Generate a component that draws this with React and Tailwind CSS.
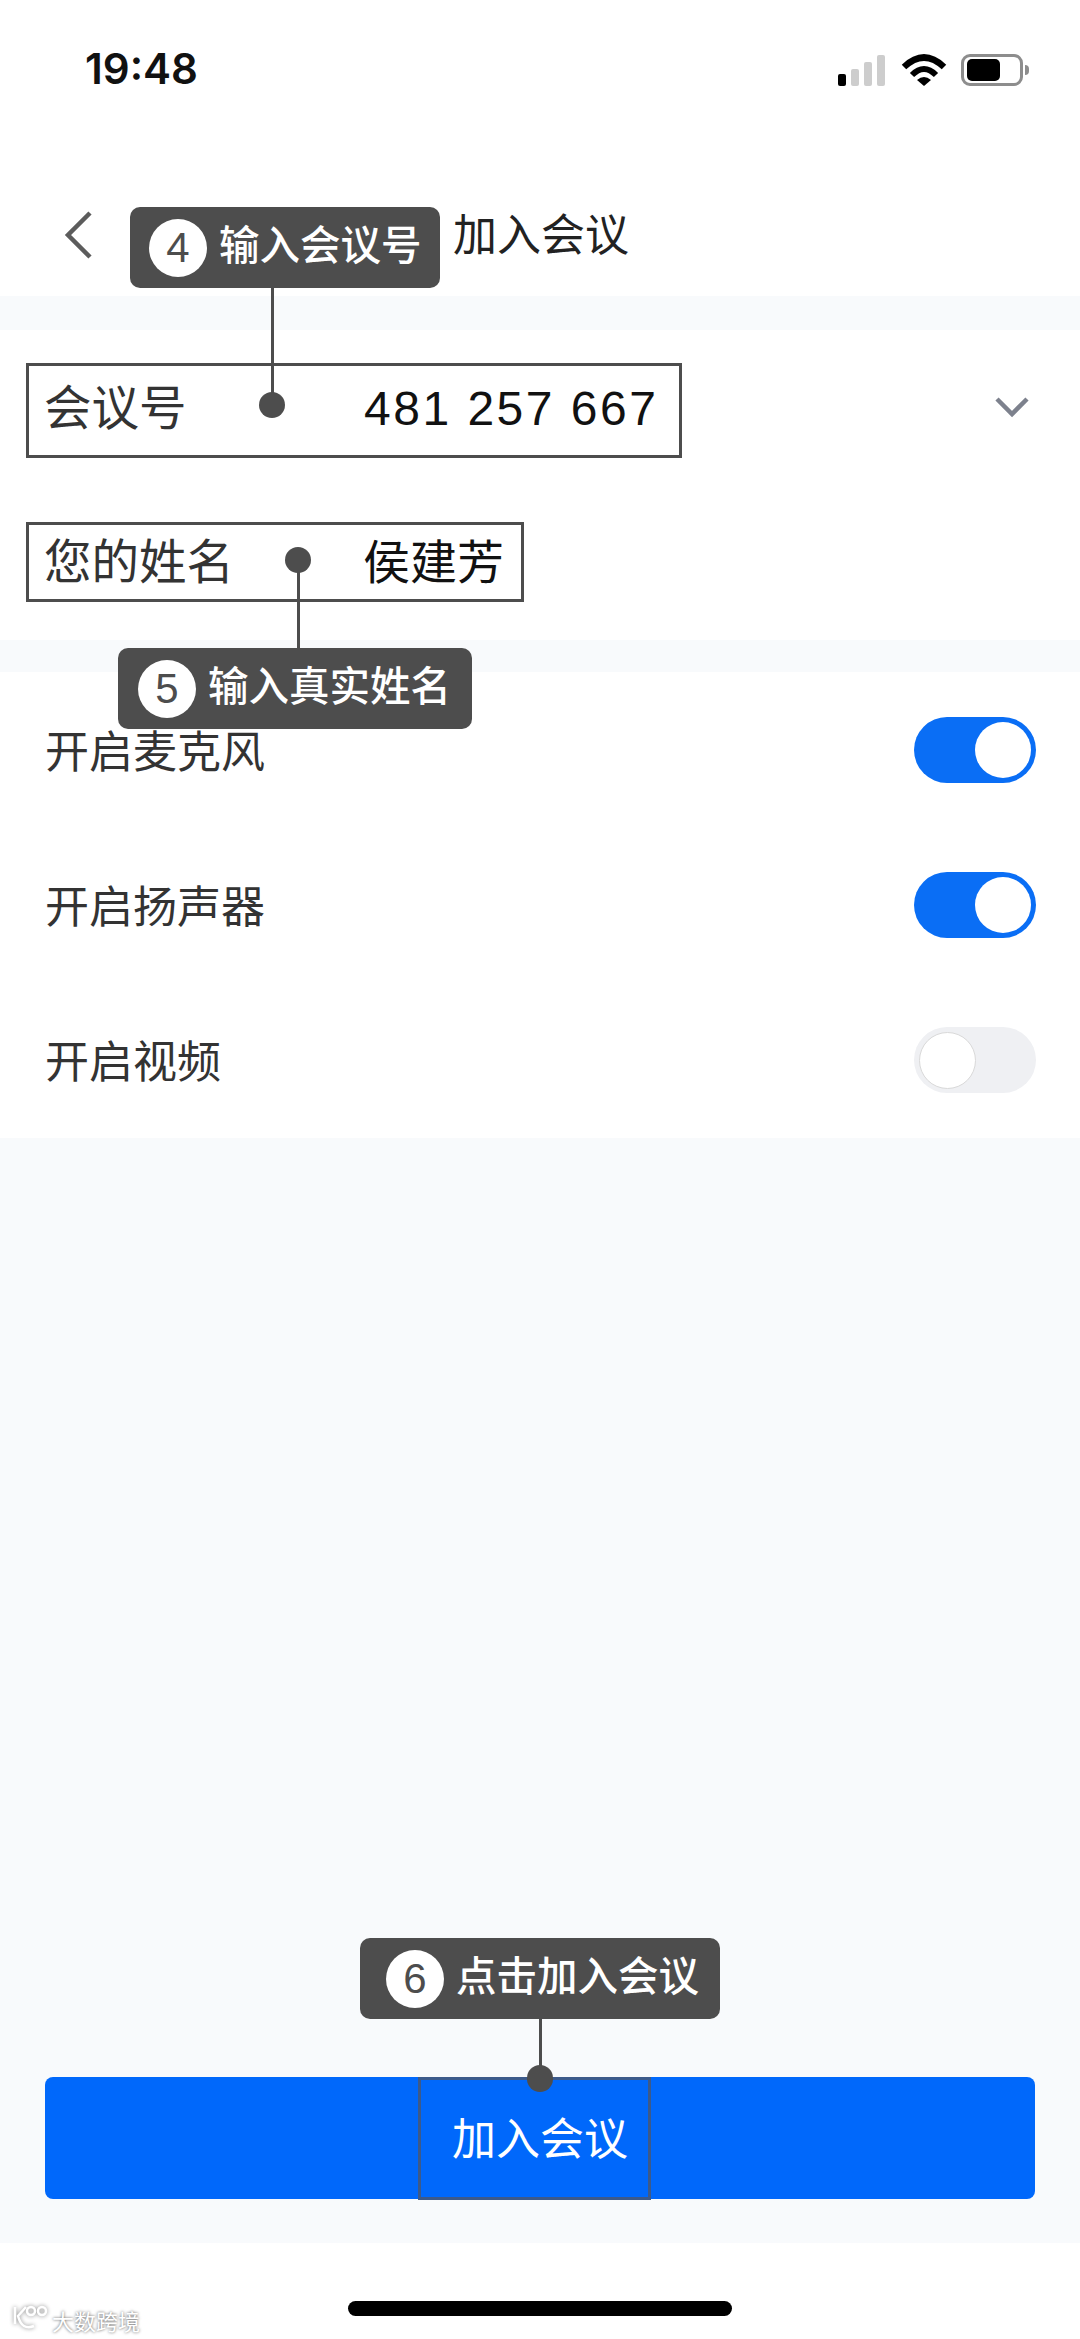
const CJK = "font-['Liberation_Sans','Noto_Sans_CJK_SC',sans-serif]";

function Toggle({ on }) {
  return on ? (
    <div className="flex h-[66px] w-[122px] items-center justify-end rounded-full bg-[#0a6ef5] pr-[5px]">
      <div className="h-[56px] w-[56px] rounded-full bg-white" />
    </div>
  ) : (
    <div className="flex h-[66px] w-[122px] items-center justify-start rounded-full bg-[#eff0f3] pl-[5px]">
      <div className="h-[57px] w-[57px] rounded-full border border-[#d9d9d9] bg-white" />
    </div>
  );
}

function SwitchRow({ label, on, h }) {
  return (
    <div className={`flex items-center justify-between pl-[45px] pr-[44px] ${h}`}>
      <span className="mt-[6px] text-[44px] leading-none text-[#333]">{label}</span>
      <Toggle on={on} />
    </div>
  );
}

function Callout({ num, text, className }) {
  return (
    <div className={`absolute flex h-[81px] items-center rounded-[10px] bg-[#4d4d4d] ${className}`}>
      <div className="flex h-[58px] w-[58px] shrink-0 items-center justify-center rounded-full bg-white text-[42px] leading-none text-[#4d4d4d]">
        {num}
      </div>
      <span className="ml-[12px] mt-[-2px] whitespace-nowrap text-[40.5px] font-medium leading-none text-white">{text}</span>
    </div>
  );
}

function StatusIcons() {
  return (
    <div className="flex items-end">
      <div className="flex items-end gap-[5px]">
        <div className="h-[12px] w-[8px] rounded-[2px] bg-black" />
        <div className="h-[17px] w-[8px] rounded-[2px] bg-[#cdcdcd]" />
        <div className="h-[24px] w-[8px] rounded-[2px] bg-[#cdcdcd]" />
        <div className="h-[31px] w-[8px] rounded-[2px] bg-[#cdcdcd]" />
      </div>
      <svg width="46" height="33" viewBox="0 0 46 33" className="ml-[16px]">
        <path d="M3 14 Q23 -5 43 14" fill="none" stroke="#000" strokeWidth="6.5" />
        <path d="M11 22 Q23 10 35 22" fill="none" stroke="#000" strokeWidth="6" />
        <path d="M16 27 Q23 21 30 27 L23 33 Z" fill="#000" />
      </svg>
      <div className="ml-[14px] flex items-center">
        <div className="flex h-[32px] w-[62px] items-center rounded-[9px] border-[3px] border-[#8d8d8d] bg-white pl-[3px]">
          <div className="h-[22px] w-[33px] rounded-[5px] bg-black" />
        </div>
        <div className="ml-[2px] h-[10px] w-[4px] rounded-r-full bg-[#8d8d8d]" />
      </div>
    </div>
  );
}

export default function App() {
  return (
    <div className={`relative flex h-[2339px] w-[1080px] flex-col overflow-hidden bg-white ${CJK}`}>
      {/* status bar */}
      <div className="flex h-[138px] shrink-0 items-center justify-between pl-[85px] pr-[51px]">
        <span className="font-['Inter',sans-serif] text-[42px] font-semibold leading-none text-[#111]">19:48</span>
        <StatusIcons />
      </div>

      {/* nav */}
      <div className="flex h-[158px] shrink-0 items-center pl-[63px] pt-[36px]">
        <svg width="30" height="50" viewBox="0 0 30 50" className="shrink-0">
          <path d="M27 3 L5 25 L27 47" fill="none" stroke="#5c5c5c" strokeWidth="4.5" />
        </svg>
        <span className="ml-[360px] mt-[2px] text-[44px] leading-none text-[#222]">加入会议</span>
      </div>

      <div className="h-[34px] shrink-0 bg-[#f8fafc]" />

      {/* form */}
      <div className="flex h-[156px] shrink-0 items-center justify-between pl-[44px] pr-[50px]">
        <div className="mt-[2px] flex items-center">
          <span className="w-[320px] text-[47.5px] leading-none text-[#333]">会议号</span>
          <span className="text-[48px] leading-none tracking-[2.5px] text-[#111]">481 257 667</span>
        </div>
        <svg width="36" height="22" viewBox="0 0 36 22" className="mt-[-2px]">
          <path d="M3 3 L18 18 L33 3" fill="none" stroke="#7d818d" strokeWidth="4.5" />
        </svg>
      </div>
      <div className="flex h-[154px] shrink-0 items-start pl-[44px] pt-[53px]">
        <span className="w-[319px] text-[47.5px] leading-none text-[#333]">您的姓名</span>
        <span className="text-[47px] leading-none text-[#111]">侯建芳</span>
      </div>

      <div className="h-[32px] shrink-0 bg-[#f8fafc]" />

      {/* switches */}
      <SwitchRow label="开启麦克风" on h="h-[155px]" />
      <SwitchRow label="开启扬声器" on h="h-[155px]" />
      <SwitchRow label="开启视频" on={false} h="h-[156px]" />

      {/* empty area with button */}
      <div className="flex flex-1 flex-col justify-end bg-[#f8fafc] px-[45px] pb-[44px]">
        <div className="flex h-[122px] items-center justify-center rounded-[8px] bg-[#0068fb] pt-[3px] text-[44px] leading-none text-white">
          加入会议
        </div>
      </div>

      {/* footer */}
      <div className="relative flex h-[96px] shrink-0 justify-center bg-white pt-[58px]">
        <div className="h-[15px] w-[384px] rounded-full bg-black" />
        <div className="absolute bottom-[5px] left-[10px] flex items-end">
          <svg width="40" height="30" viewBox="0 0 40 30" className="drop-shadow-[0_0_2px_#888]">
            <g fill="none" stroke="#fff" strokeWidth="2.5">
              <path d="M5 3 V20" />
              <path d="M16 3 L8 12 Q12 27 24 22" />
              <circle cx="21" cy="7" r="4" />
              <circle cx="32" cy="7" r="4" />
            </g>
          </svg>
          <span className="ml-[2px] text-[22px] leading-none text-white [text-shadow:0_0_3px_#555]">大数跨境</span>
        </div>
      </div>

      {/* annotation overlays */}
      <div className="absolute left-[26px] top-[363px] h-[95px] w-[656px] border-[3px] border-[#4d4d4d]" />
      <div className="absolute left-[26px] top-[522px] h-[80px] w-[498px] border-[3px] border-[#4d4d4d]" />
      <div className="absolute left-[418px] top-[2077px] h-[123px] w-[233px] border-[3px] border-[#3c5a8a]" />

      <div className="absolute left-[271px] top-[288px] h-[110px] w-[3px] bg-[#4d4d4d]" />
      <div className="absolute left-[259px] top-[392px] h-[26px] w-[26px] rounded-full bg-[#4d4d4d]" />

      <div className="absolute left-[297px] top-[565px] h-[84px] w-[3px] bg-[#4d4d4d]" />
      <div className="absolute left-[285px] top-[547px] h-[26px] w-[26px] rounded-full bg-[#4d4d4d]" />

      <div className="absolute left-[539px] top-[2019px] h-[50px] w-[3px] bg-[#4d4d4d]" />
      <div className="absolute left-[527px] top-[2065px] h-[27px] w-[26px] rounded-full bg-[#4d4d4d]" />

      <Callout num="4" text="输入会议号" className="left-[130px] top-[207px] w-[310px] pl-[19px]" />
      <Callout num="5" text="输入真实姓名" className="left-[118px] top-[648px] w-[354px] pl-[20px]" />
      <Callout num="6" text="点击加入会议" className="left-[360px] top-[1938px] w-[360px] pl-[26px]" />
    </div>
  );
}
